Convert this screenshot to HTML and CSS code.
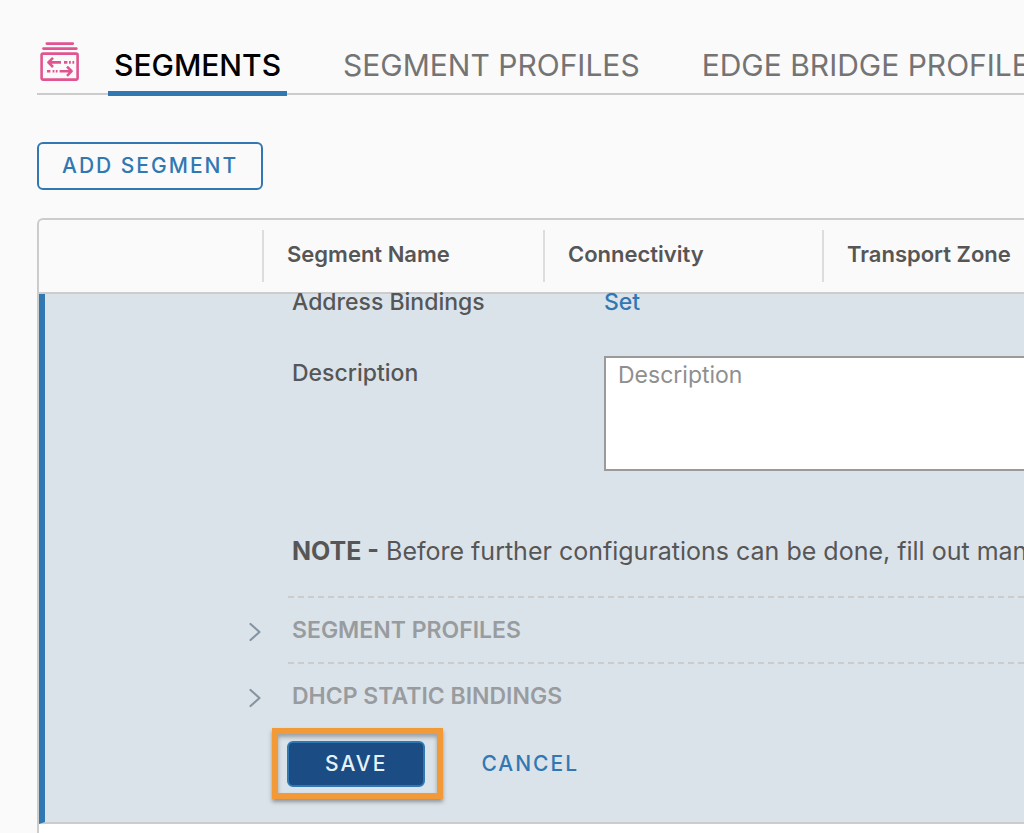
FILE: index.html
```html
<!DOCTYPE html>
<html lang="en">
<head>
<meta charset="utf-8">
<meta name="viewport" content="width=device-width, initial-scale=1">
<title>Segments</title>
<link rel="stylesheet" href="styles.css">
</head>
<body>
<header class="topbar">
  <svg class="logo" width="40" height="40" viewBox="0 0 40 40" fill="none" stroke="#e0558f" stroke-width="2.6" stroke-linejoin="round">
    <path d="M6.8 1.6h26M3.4 6.6h33" stroke-linecap="round"/>
    <rect x="1.6" y="11.6" width="36" height="26" rx="1.5"/>
    <path d="M9 20.4h12M24 20.4h3.4M29 20.4h1.8M32.4 20.4h1.8M13 15.8L8.4 20.4l4.6 4.6"/>
    <path d="M7 29.2h3.4M12.6 29.2h1.8M15.8 29.2h1.8M19.6 29.2h12M27 24.6l4.6 4.6-4.6 4.6"/>
  </svg>
  <nav class="tabs">
    <a href="#segments" class="tab active">SEGMENTS</a>
    <a href="#profiles" class="tab">SEGMENT PROFILES</a>
    <a href="#bridge" class="tab">EDGE BRIDGE PROFILES</a>
  </nav>
</header>
<main>
  <button type="button" class="btn">ADD SEGMENT</button>
  <table class="grid">
    <colgroup>
      <col class="col-actions">
      <col class="col-name">
      <col class="col-connect">
      <col>
    </colgroup>
    <thead>
      <tr>
        <td></td>
        <th scope="col"><div class="cell">Segment Name</div></th>
        <th scope="col"><div class="cell">Connectivity</div></th>
        <th scope="col"><div class="cell">Transport Zone</div></th>
      </tr>
    </thead>
    <tbody>
      <tr>
        <td colspan="4" class="detail">
          <form class="form">
            <div class="field">
              <span class="label">Address Bindings</span>
              <a href="#set" class="link">Set</a>
            </div>
            <div class="field">
              <label class="label" for="description">Description</label>
              <textarea id="description" class="textarea" placeholder="Description"></textarea>
            </div>
            <p class="note"><b>NOTE -</b> Before further configurations can be done, fill out mandatory</p>
            <button type="button" class="section" disabled>
              <svg class="chevron" width="14" height="20" viewBox="0 0 14 20" fill="none" stroke="#8494a0" stroke-width="2.2" stroke-linecap="round" stroke-linejoin="round"><path d="M2.5 2l9 8-9 8"/></svg>
              <span class="title">SEGMENT PROFILES</span>
            </button>
            <button type="button" class="section" disabled>
              <svg class="chevron" width="14" height="20" viewBox="0 0 14 20" fill="none" stroke="#8494a0" stroke-width="2.2" stroke-linecap="round" stroke-linejoin="round"><path d="M2.5 2l9 8-9 8"/></svg>
              <span class="title">DHCP STATIC BINDINGS</span>
            </button>
            <div class="actions">
              <div class="highlight"><button type="button" class="btn primary">SAVE</button></div>
              <button type="button" class="btn flat">CANCEL</button>
            </div>
          </form>
        </td>
      </tr>
    </tbody>
  </table>
</main>
</body>
</html>
```

FILE: styles.css
```css
* {
  box-sizing: border-box;
}
html {
  background: #fafafa;
}
body {
  margin: 0;
  padding: 36px 0 0 37px;
  min-height: 100vh;
  overflow: hidden;
  font-family: Inter, "Liberation Sans", sans-serif;
  font-size: 23px;
  line-height: 28px;
  color: #565656;
}
button, textarea {
  font: inherit;
}

/* tabs */
.topbar {
  display: flex;
  gap: 28px;
  border-bottom: 2px solid #cccccc;
}
.logo {
  flex: none;
  margin: 6px 0 0 3px;
}
.tabs {
  display: flex;
  gap: 50px;
  margin-bottom: -3px;
}
.tab {
  padding: 11px 6px 8px;
  border-bottom: 5px solid transparent;
  font-size: 30px;
  line-height: 36px;
  white-space: nowrap;
  text-decoration: none;
  color: #747474;
}
.tab.active {
  border-color: #3178b3;
  font-weight: 500;
  color: #000;
}

/* buttons */
.btn {
  height: 48px;
  padding: 0 23px;
  border: 2px solid #3178b3;
  border-radius: 6px;
  background: transparent;
  font-size: 21px;
  font-weight: 500;
  line-height: 42px;
  letter-spacing: 2px;
  color: #3178b3;
}
main > .btn {
  margin: 47px 0 28px;
  display: block;
}
.primary {
  display: block;
  height: 46px;
  padding: 0 36px;
  background: #1b4c84;
  color: #e6f1f8;
}
.flat {
  padding: 0;
  border: 0;
}

/* grid */
.grid {
  width: 100%;
  table-layout: fixed;
  border-collapse: separate;
  border-spacing: 0;
  border: 2px solid #cccccc;
  border-right: 0;
  border-bottom: 0;
  border-radius: 6px 0 0 0;
}
.col-actions {
  width: 223px;
}
.col-name {
  width: 281px;
}
.col-connect {
  width: 279px;
}
.grid td, .grid th {
  padding: 0;
  text-align: left;
}
.grid thead td, .grid th {
  height: 74px;
  border-bottom: 2px solid #cccccc;
}
.cell {
  height: 52px;
  padding-left: 23px;
  border-left: 2px solid #dddddd;
  font-size: 22px;
  font-weight: 600;
  line-height: 48px;
  white-space: nowrap;
}
.grid .detail {
  border-left: 6px solid #3178b3;
  border-bottom: 2px solid #cccccc;
  background: #dbe3ea;
}

/* expanded row */
.form {
  padding: 0 0 23px 203px;
}
.field {
  display: grid;
  grid-template-columns: 312px 1fr;
  margin-left: 44px;
  line-height: 16px;
  align-items: start;
}
.label {
  font-weight: 500;
}
.field + .field {
  margin-top: 46px;
}
.field + .field .label {
  padding-top: 9px;
}
.link {
  font-weight: 500;
  text-decoration: none;
  color: #3178b3;
}
.textarea {
  width: 100%;
  height: 115px;
  padding: 5px 12px;
  border: 2px solid #9a9a9a;
  border-right: 0;
  border-radius: 0;
  background: #fff;
  line-height: 24px;
  resize: none;
}
.textarea::placeholder {
  color: #8f8f8f;
}
.note {
  margin: 66px 0 31px 44px;
  font-size: 25px;
  white-space: nowrap;
}
.section {
  display: flex;
  align-items: center;
  gap: 26px;
  width: 100%;
  padding: 0;
  border: 0;
  background: transparent;
  text-align: left;
  color: #999c9f;
}
.chevron {
  flex: none;
  margin-top: 6px;
}
.title {
  flex: 1;
  padding: 18px 0 18px 4px;
  border-top: 2px dashed #cccccc;
  font-weight: 600;
}
.actions {
  display: flex;
  align-items: center;
  gap: 38px;
  margin-left: 24px;
}
.highlight {
  padding: 7px 12px 6px 9px;
  border: 6px solid #f29a37;
  box-shadow: 0 3px 4px rgba(0, 0, 0, .35), inset 0 3px 4px rgba(0, 0, 0, .3);
}
main::after {
  content: "";
  display: block;
  height: 40px;
  border-left: 2px solid #cccccc;
  background: #fff;
}
```
